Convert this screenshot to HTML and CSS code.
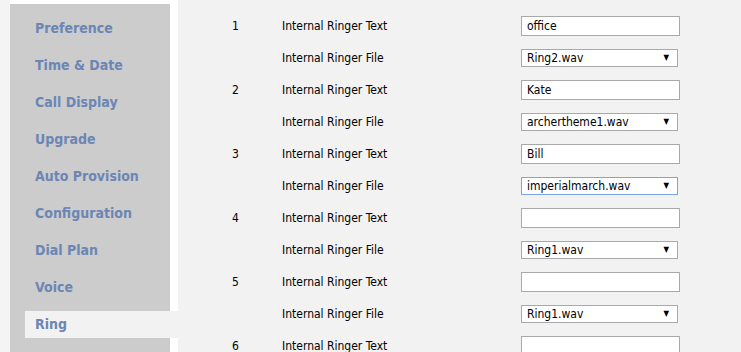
FILE: index.html
```html
<!DOCTYPE html>
<html lang="en">
<head>
  <meta charset="UTF-8">
  <meta name="viewport" content="width=device-width, initial-scale=1.0">
  <title>Ring</title>
  <link rel="stylesheet" href="styles.css">
</head>
<body>
  <div class="page">
    <div class="side">
      <ul class="menu">
        <li class="menu__item">Preference</li>
        <li class="menu__item">Time &amp; Date</li>
        <li class="menu__item">Call Display</li>
        <li class="menu__item">Upgrade</li>
        <li class="menu__item">Auto Provision</li>
        <li class="menu__item">Configuration</li>
        <li class="menu__item">Dial Plan</li>
        <li class="menu__item">Voice</li>
        <li class="menu__item is-active">Ring</li>
      </ul>
    </div>
    <div class="content">
      <div class="ring-table">
        <div class="ring-table__num">1</div>
        <div class="ring-table__label">Internal Ringer Text</div>
        <div><input class="field" type="text" value="office"></div>
        <div></div>
        <div class="ring-table__label">Internal Ringer File</div>
        <div class="select"><span class="select__value">Ring2.wav</span></div>

        <div class="ring-table__num">2</div>
        <div class="ring-table__label">Internal Ringer Text</div>
        <div><input class="field" type="text" value="Kate"></div>
        <div></div>
        <div class="ring-table__label">Internal Ringer File</div>
        <div class="select"><span class="select__value">archertheme1.wav</span></div>

        <div class="ring-table__num">3</div>
        <div class="ring-table__label">Internal Ringer Text</div>
        <div><input class="field" type="text" value="Bill"></div>
        <div></div>
        <div class="ring-table__label">Internal Ringer File</div>
        <div class="select is-focused"><span class="select__value">imperialmarch.wav</span></div>

        <div class="ring-table__num">4</div>
        <div class="ring-table__label">Internal Ringer Text</div>
        <div><input class="field" type="text" value=""></div>
        <div></div>
        <div class="ring-table__label">Internal Ringer File</div>
        <div class="select"><span class="select__value">Ring1.wav</span></div>

        <div class="ring-table__num">5</div>
        <div class="ring-table__label">Internal Ringer Text</div>
        <div><input class="field" type="text" value=""></div>
        <div></div>
        <div class="ring-table__label">Internal Ringer File</div>
        <div class="select"><span class="select__value">Ring1.wav</span></div>

        <div class="ring-table__num">6</div>
        <div class="ring-table__label">Internal Ringer Text</div>
        <div><input class="field" type="text" value=""></div>
        <div></div>
        <div class="ring-table__label">Internal Ringer File</div>
        <div class="select"><span class="select__value">Ring1.wav</span></div>
      </div>
    </div>
  </div>
</body>
</html>
```

FILE: styles.css
```css
* {
  box-sizing: border-box;
}

html,
body {
  margin: 0;
  height: 100%;
  overflow: hidden;
}

body {
  font-family: "DejaVu Sans Condensed", "DejaVu Sans", sans-serif;
  background: #fff;
}

.page {
  display: flex;
  height: 100%;
}

.side {
  width: 178px;
  flex: none;
  padding-left: 10px;
  padding-top: 4px;
  background: linear-gradient(to right, #f4f4f4 10px, #fff 10px);
}

.menu {
  width: 160px;
  height: 100%;
  margin: 0;
  padding: 11px 0 0 15px;
  list-style: none;
  background: #ccc;
}

.menu__item {
  width: 153px;
  height: 27px;
  margin-bottom: 10px;
  padding-left: 10px;
  line-height: 27px;
  font-size: 14px;
  font-weight: bold;
  color: #6b86b4;
  white-space: nowrap;
}

.menu__item.is-active {
  background: #f2f2f2;
}

.content {
  flex: 1;
  background: #f2f2f2;
  padding: 10px 0 0 54px;
}

.ring-table {
  display: grid;
  grid-template-columns: 50px 239px 170px;
  grid-auto-rows: 32px;
  align-items: center;
  font-size: 12px;
  color: #000;
}

.field {
  display: block;
  width: 159px;
  height: 20px;
  margin: 0;
  padding: 0 5px;
  border: 1px solid #a9a9a9;
  background: #fff;
  font-family: inherit;
  font-size: 12px;
  color: #000;
}

.select {
  position: relative;
  width: 157px;
  height: 18px;
  padding: 0 5px;
  border: 1px solid #a9a9a9;
  background: #fff;
  line-height: 16px;
}

.select::after {
  content: "\25BC";
  position: absolute;
  right: 8px;
  top: 0;
  font-size: 8px;
  line-height: 16px;
}

.select.is-focused {
  border-color: #7aa5e4;
}
```
